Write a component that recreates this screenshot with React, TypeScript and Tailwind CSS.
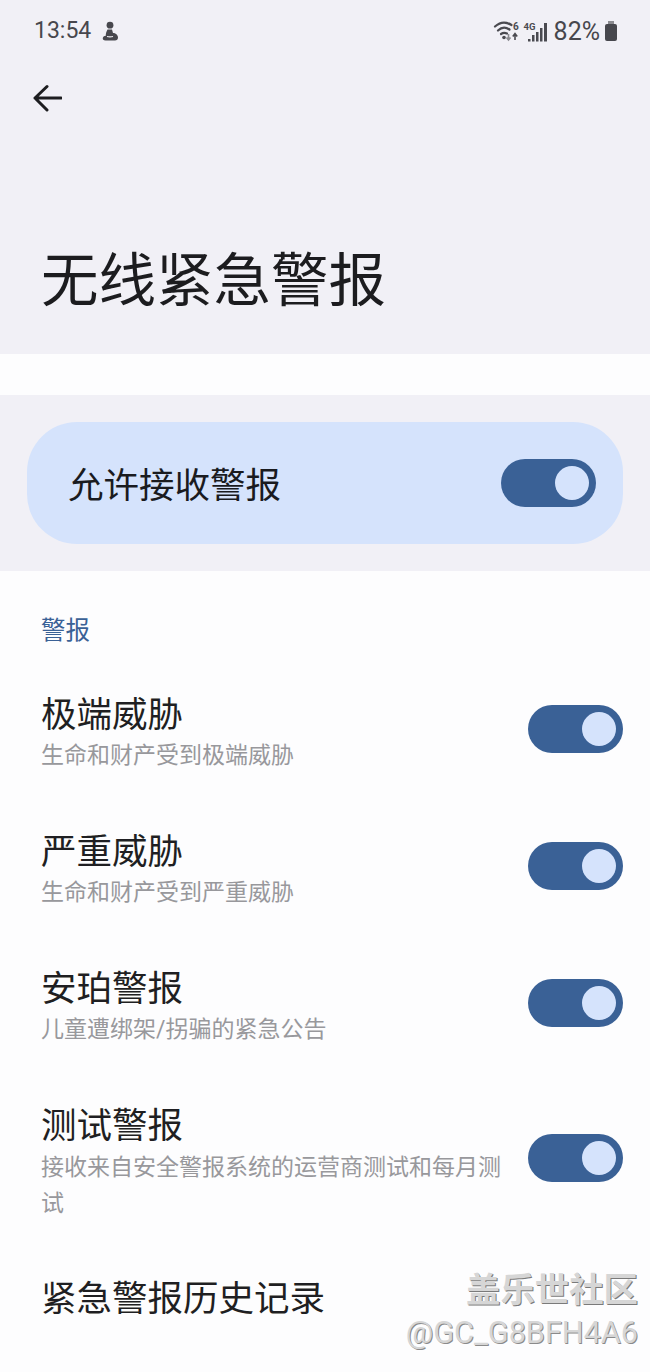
import React from 'react';

const FONT = "font-['Roboto','Noto_Sans_CJK_SC',sans-serif]";

const Toggle = () => (
  <div className="flex h-[48px] w-[95px] shrink-0 items-center justify-end rounded-full bg-[#3a6196] pr-[7px]">
    <div className="h-[34px] w-[34px] rounded-full bg-[#d5e3fc]" />
  </div>
);

// wifi + 4G signal cluster, 56px wide
const StatusIcons = () => (
  <svg width="56" height="24" viewBox="0 0 56 24" className="text-[#4a4a50]" fill="none">
    <g stroke="currentColor" strokeLinecap="round" strokeWidth="2.200">
      <path d="M2 7.500C7.500 2.500 13 2.500 18.500 6" />
      <path d="M5 11.500C8.500 8 13 8 16.500 10.500" />
      <path d="M8 15C10 13.500 12 13.500 14 14.500" />
    </g>
    <circle cx="11" cy="18.500" r="1.800" fill="currentColor" />
    <path d="M15.500 15v5.500m-2-2 2 2.500 2-2.500" stroke="#8b8b90" strokeWidth="1.600" />
    <path d="M22 21v-6m-2.200 2.500 2.200-3 2.200 3" stroke="currentColor" strokeWidth="1.600" />
    <text x="20" y="11" fontSize="10" fontWeight="700" fill="currentColor" fontFamily="Roboto">6</text>
    <text x="30.500" y="11" fontSize="9.500" fontWeight="700" fill="currentColor" fontFamily="Roboto">4G</text>
    <g fill="currentColor">
      <rect x="35" y="20" width="2.500" height="2.500" />
      <rect x="39" y="16" width="2.500" height="6.500" />
      <rect x="43" y="13" width="2.500" height="9.500" />
      <rect x="47" y="9" width="2.500" height="13.500" />
      <rect x="51" y="4" width="3" height="18.500" />
    </g>
  </svg>
);

const items = [
  { title: '极端威胁', desc: '生命和财产受到极端威胁' },
  { title: '严重威胁', desc: '生命和财产受到严重威胁' },
  { title: '安珀警报', desc: '儿童遭绑架/拐骗的紧急公告' },
];

export default function App() {
  return (
    <div className={`relative h-[1372px] w-[650px] overflow-hidden bg-[#fdfdfe] ${FONT}`}>
      <div className="h-[354px] bg-[#f1f0f6]">
        <div className="flex h-[60px] items-center justify-between pl-[34px] pr-[32px] pt-[2px] text-[#47474d]">
          <div className="flex items-center gap-[11px]">
            <span className="text-[23px]">13:54</span>
            <svg width="17" height="20" viewBox="0 0 17 20" fill="currentColor">
              <circle cx="8" cy="4.200" r="3.400" />
              <path d="M5.500 8.500h4.500l1 3.500c2.500 0 5 2 5 4.500 0 1.800-1.200 3-3 3H3.500C1.500 19.500.5 18.300.8 17c.3-1.500 1.800-2 3-2.200-.2-2.300.7-4.300 1.700-6.300z" />
              <path d="M5 15.500c2 .5 4 .5 6 0" stroke="#f1f0f6" strokeWidth="1.200" fill="none" />
            </svg>
          </div>
          <div className="flex items-center">
            <StatusIcons />
            <span className="ml-[5px] text-[25px] leading-none">82%</span>
            <svg width="14" height="20" viewBox="0 0 14 20" className="ml-[4px]" fill="currentColor">
              <rect x="4" y="0" width="6" height="3" opacity="0.6" />
              <rect x="1" y="3" width="12" height="17" rx="2" />
            </svg>
          </div>
        </div>
        <div className="pl-[32px] pt-[24px]">
          <svg width="30" height="30" viewBox="0 0 30 30" fill="none" stroke="#1d1d20" strokeWidth="3" strokeLinecap="round" strokeLinejoin="round">
            <path d="M3 14h26M15 2.500 3 14 15 26" />
          </svg>
        </div>
        <h1 className="pl-[41px] pt-[133px] text-[57.500px] font-normal leading-[70px] text-[#1c1c1f]">无线紧急警报</h1>
      </div>

      <div className="h-[41px]" />

      <div className="h-[176px] bg-[#f1f0f6] px-[27px] pt-[27px]">
        <div className="flex h-[122px] items-center justify-between rounded-[50px] bg-[#d5e3fc] pl-[41px] pr-[27px]">
          <span className="mt-[8px] text-[35.500px] text-[#1a1b1f]">允许接收警报</span>
          <Toggle />
        </div>
      </div>

      <div className="pl-[41px] pr-[27px] pt-[44px]">
        <div className="text-[24.500px] leading-[32px] text-[#3a6196]">警报</div>
        <div className="mt-[31px] flex flex-col gap-[35px]">
          {items.map((item) => (
            <div key={item.title} className="flex h-[102px] items-center justify-between">
              <div className="pt-[5px]">
                <div className="text-[35.500px] leading-[49px] text-[#1f1f22]">{item.title}</div>
                <div className="text-[23px] leading-[32px] text-[#98989c]">{item.desc}</div>
              </div>
              <Toggle />
            </div>
          ))}
          <div className="flex h-[138px] items-center justify-between">
            <div className="w-[465px] pb-[5px] pt-[14px]">
              <div className="text-[35.500px] leading-[47px] text-[#1f1f22]">测试警报</div>
              <div className="text-[23px] leading-[36px] text-[#98989c]">接收来自安全警报系统的运营商测试和每月测试</div>
            </div>
            <Toggle />
          </div>
        </div>
        <div className="mt-[47px] text-[35.500px] leading-[50px] text-[#1f1f22]">紧急警报历史记录</div>
      </div>

      <div className="absolute bottom-[20px] right-[12px] flex flex-col items-end text-[#d6d6d6]">
        <div className="text-[34.400px] font-bold leading-[38px] [text-shadow:1px_1px_0_#7a7a7a]">盖乐世社区</div>
        <div className="mt-[5px] text-[30.600px] leading-[38px] [text-shadow:1px_1px_0_#8a8a8a]">@GC_G8BFH4A6</div>
      </div>
    </div>
  );
}
